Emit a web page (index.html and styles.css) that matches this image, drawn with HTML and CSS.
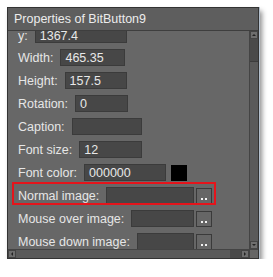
FILE: index.html
```html
<!DOCTYPE html>
<html lang="en">
<head>
  <meta charset="UTF-8" />
  <title>Properties of BitButton9</title>
  <link rel="stylesheet" href="styles.css">
</head>
<body>
  <div class="window">
    <div class="title-bar">Properties of BitButton9</div>

    <div class="panel">
      <div class="view">
        <div class="row first">
          <span class="label">y:</span>
          <span class="field w-y">1367.4</span>
        </div>
        <div class="row">
          <span class="label">Width:</span>
          <span class="field w-width">465.35</span>
        </div>
        <div class="row">
          <span class="label">Height:</span>
          <span class="field w-height">157.5</span>
        </div>
        <div class="row">
          <span class="label">Rotation:</span>
          <span class="field w-rotation">0</span>
        </div>
        <div class="row">
          <span class="label">Caption:</span>
          <span class="field w-caption"></span>
        </div>
        <div class="row">
          <span class="label">Font size:</span>
          <span class="field w-fontsize">12</span>
        </div>
        <div class="row">
          <span class="label">Font color:</span>
          <span class="field w-fontcolor">000000</span>
          <span class="swatch"></span>
        </div>
        <div class="row highlight">
          <span class="label">Normal image:</span>
          <span class="field w-normal"></span>
          <span class="dots-button"><i></i><i></i></span>
        </div>
        <div class="row">
          <span class="label">Mouse over image:</span>
          <span class="field w-over"></span>
          <span class="dots-button"><i></i><i></i></span>
        </div>
        <div class="row">
          <span class="label">Mouse down image:</span>
          <span class="field w-down"></span>
          <span class="dots-button"><i></i><i></i></span>
        </div>
      </div>

      <!-- vertical scrollbar -->
      <div class="vscroll">
        <span class="arrow up"></span>
        <span class="vthumb"></span>
        <span class="vtrack"></span>
        <span class="arrow down"></span>
      </div>

      <!-- horizontal scrollbar -->
      <div class="hscroll">
        <span class="arrow left"></span>
        <span class="htrack"></span>
        <span class="hthumb"></span>
        <span class="arrow right"></span>
      </div>

      <div class="corner"></div>
    </div>
  </div>
</body>
</html>
```

FILE: styles.css
```css
body {
  margin: 0;
  background: #fff;
  font-family: "Liberation Sans", Arial, sans-serif;
  font-size: 12.5px;
  color: #e4e4e4;
}

.window {
  margin: 7px 0 0 7px;
  width: 250px;
  height: 250px;
  border: 1px solid #333;
  background: #666;
  display: flex;
  flex-direction: column;
  box-shadow: 1px 0 0 #b3bfcc, 3px 4px 5px rgba(0, 0, 0, 0.45);
}

.title-bar {
  height: 22px;
  line-height: 22px;
  padding-left: 6px;
  background: #5e5e5e;
  border-bottom: 1px solid #3e3e3e;
  color: #ececec;
  white-space: nowrap;
  overflow: hidden;
}

.panel {
  flex: 1;
  display: grid;
  grid-template-columns: minmax(0, 1fr) 9px;
  grid-template-rows: minmax(0, 1fr) 9px;
  min-height: 0;
}

.view {
  background: #676767;
  display: flex;
  flex-direction: column;
  min-height: 0;
}

.row {
  height: 23px;
  flex: none;
  display: flex;
  align-items: center;
  gap: 7px;
  padding-left: 10px;
  white-space: nowrap;
}

/* the list is scrolled: only the lower part of the first row shows */
.row.first {
  height: 15px;
  align-items: flex-start;
}

.row.first .label {
  line-height: 11px;
}

.row.first .field {
  height: 12px;
  line-height: 11px;
  border-top: none;
}

.label {
  color: #e6e6e6;
}

.field {
  height: 17px;
  line-height: 17px;
  box-sizing: border-box;
  padding-left: 4px;
  background: #474747;
  border: 1px solid #3b3b3b;
  color: #e8e8e8;
  flex: none;
}

.w-y { width: 92px; }
.w-width { width: 65px; }
.w-height { width: 62px; }
.w-rotation { width: 53px; }
.w-caption { width: 70px; }
.w-fontsize { width: 63px; }
.w-fontcolor { width: 82px; }
.w-normal { width: 88px; margin-right: -5px; }
.w-over { width: 63px; margin-right: -5px; }
.w-down { width: 57px; margin-right: -5px; }

.swatch {
  width: 16px;
  height: 16px;
  background: #000;
  margin-left: -2px;
  flex: none;
}

.dots-button {
  width: 16px;
  height: 16px;
  box-sizing: border-box;
  border: 1px solid #3a3a3a;
  background: #666;
  display: flex;
  justify-content: center;
  align-items: flex-end;
  gap: 2px;
  padding-bottom: 3px;
  flex: none;
}

.dots-button i {
  width: 2px;
  height: 2px;
  background: #f2f2f2;
}

.highlight {
  position: relative;
}

.highlight::after {
  content: "";
  position: absolute;
  left: 4px;
  top: -2px;
  width: 204px;
  height: 23px;
  border: 2px solid #e5141b;
  box-sizing: border-box;
}

.vscroll {
  display: flex;
  flex-direction: column;
  background: #5a5a5a;
  border-left: 1px solid #444;
}

.vthumb {
  height: 22px;
  background: #4a4a4a;
  border-bottom: 1px solid #3c3c3c;
}

.vtrack {
  flex: 1;
}

.hscroll {
  display: flex;
  background: #5a5a5a;
  border-top: 1px solid #444;
}

.htrack {
  flex: 1;
}

.hthumb {
  width: 11px;
  background: #4a4a4a;
}

.arrow {
  flex: none;
  width: 8px;
  height: 8px;
  background: #6e6e6e;
  border: 1px solid #444;
  box-sizing: border-box;
  display: flex;
  align-items: center;
  justify-content: center;
}

.arrow::before {
  content: "";
  width: 0;
  height: 0;
  border: 2px solid transparent;
}

.arrow.up::before {
  border-bottom-color: #222;
  border-top-width: 0;
}

.arrow.down::before {
  border-top-color: #222;
  border-bottom-width: 0;
}

.arrow.left::before {
  border-right-color: #222;
  border-left-width: 0;
}

.arrow.right::before {
  border-left-color: #222;
  border-right-width: 0;
}

.corner {
  background: #666;
  border-top: 1px solid #444;
  border-left: 1px solid #444;
}
```
